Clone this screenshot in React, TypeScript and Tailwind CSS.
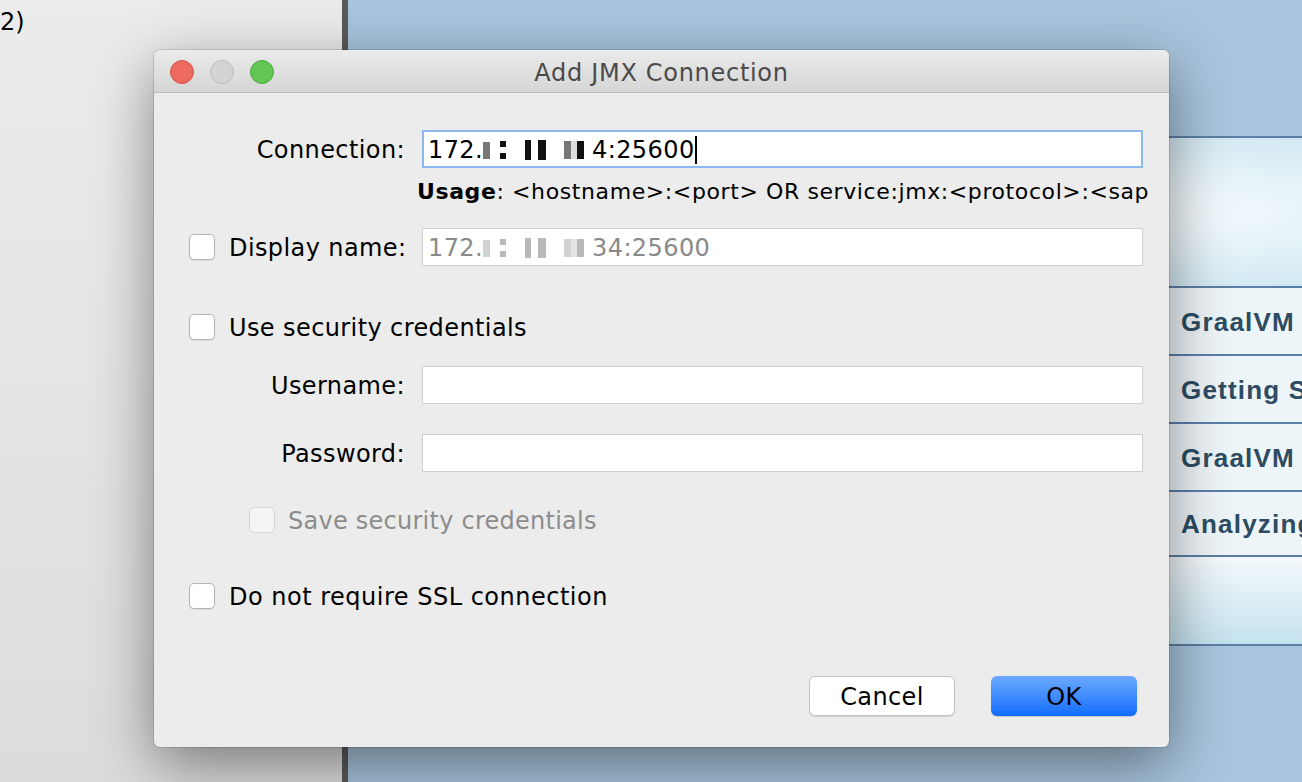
import React from "react";

const font = "font-['DejaVu_Sans','Liberation_Sans',sans-serif]";

// ─── Small pieces ─────────────────────────────────────────────────────────────
function Checkbox({ disabled = false }: { disabled?: boolean }) {
  return (
    <div
      className={
        disabled
          ? "w-[26px] h-[26px] rounded-[5px] border border-[#d6d6d6] bg-[#f4f4f4] shrink-0"
          : "w-[26px] h-[26px] rounded-[5px] border border-[#b4b4b4] bg-white shadow-[0_1px_1px_rgba(0,0,0,0.08)] shrink-0"
      }
    />
  );
}

function Label({ text }: { text: string }) {
  return (
    <div className="w-[251px] pt-[2px] text-right text-[24px] tracking-[0.4px] text-black shrink-0 whitespace-nowrap">
      {text}
    </div>
  );
}

// pixelated, blurred-out part of the address
function MaskedOctets({ faded = false }: { faded?: boolean }) {
  const dark = faded ? "bg-[#b9b9b9]" : "bg-[#111]";
  const mid = faded ? "bg-[#d2d2d2]" : "bg-[#777]";
  return (
    <div className="flex items-center h-[24px]">
      <span className={`w-[7px] h-[17px] ${mid}`} />
      <span className="w-[10px]" />
      <span className="flex flex-col justify-between w-[6px] h-[18px]">
        <span className={`h-[6px] ${dark}`} />
        <span className={`h-[6px] ${dark}`} />
      </span>
      <span className="w-[19px]" />
      <span className={`w-[6px] h-[20px] ${dark}`} />
      <span className="w-[7px]" />
      <span className={`w-[8px] h-[20px] ${dark}`} />
      <span className="w-[18px]" />
      <span className={`w-[7px] h-[18px] ${mid}`} />
      <span className={`w-[6px] h-[18px] ${faded ? "bg-[#e4e4e4]" : "bg-[#ddd]"}`} />
      <span className={`w-[7px] h-[18px] ${dark}`} />
      <span className="w-[8px]" />
    </div>
  );
}

// ─── Background window ────────────────────────────────────────────────────────
function Backdrop() {
  const rows = ["GraalVM", "Getting Started", "GraalVM", "Analyzing"];
  return (
    <div className="flex w-full h-full">
      <div className="w-[342px] h-full bg-gradient-to-b from-[#ececec] to-[#dcdcdc] text-[24px] text-black pt-[4px]">
        2)
      </div>
      <div className="w-[6px] h-full bg-[#5a5a5a]" />
      <div className="flex-1 h-full bg-[#a8c5dd] flex flex-col overflow-hidden">
        <div className="h-[136px] shrink-0" />
        <div className="h-[152px] shrink-0 border-y-2 border-[#5a7fa6] bg-[radial-gradient(ellipse_at_62%_50%,#ffffff_0%,#eef7fb_35%,#c7e3ef_100%)]" />
        {rows.map((r, i) => (
          <div
            key={i}
            className={`${i === 3 ? "h-[65px]" : "h-[68px]"} shrink-0 border-b-2 border-[#5a7fa6] bg-[#eef5f9] flex items-center pl-[833px] pt-[2px] font-['Liberation_Sans',sans-serif] text-[26px] font-bold text-[#2d4c62] whitespace-nowrap tracking-[1.2px]`}
          >
            {r}
          </div>
        ))}
        <div className="h-[89px] shrink-0 border-b-2 border-[#5a7fa6] bg-gradient-to-b from-[#f4f9fc] to-[#c4e2ee]" />
      </div>
    </div>
  );
}

// ─── Dialog ───────────────────────────────────────────────────────────────────
function Dialog() {
  return (
    <div className="absolute left-[154px] top-[50px] w-[1015px] h-[697px] rounded-[6px] bg-[#ececec] shadow-[0_18px_60px_rgba(0,0,0,0.45),0_0_0_1px_rgba(0,0,0,0.12)] flex flex-col overflow-hidden">
      {/* Title bar */}
      <div className="relative h-[43px] shrink-0 bg-gradient-to-b from-[#ebebeb] to-[#d6d6d6] border-b border-[#bcbcbc] flex items-center justify-center pt-[3px]">
        <div className="absolute left-[16px] top-[10px] flex gap-[16px]">
          <span className="w-[24px] h-[24px] rounded-full bg-[#ee6a5f] border border-[#d5554b]" />
          <span className="w-[24px] h-[24px] rounded-full bg-[#d3d3d3] border border-[#bdbdbd]" />
          <span className="w-[24px] h-[24px] rounded-full bg-[#62c655] border border-[#4fa840]" />
        </div>
        <span className="text-[24px] tracking-[0.7px] text-[#4a4a4a]">Add JMX Connection</span>
      </div>

      {/* Body */}
      <div className="flex flex-col pt-[37px] text-[24px] tracking-[0.4px] whitespace-nowrap">
        {/* Connection */}
        <div className="flex items-center h-[38px]">
          <Label text="Connection:" />
          <div className="ml-[17px] w-[721px] h-[38px] bg-white border-2 border-[#8db8ee] flex items-center pl-[4px] pt-[2px] text-black">
            <span>172.</span>
            <MaskedOctets />
            <span>4:25600</span>
            <span className="w-[2px] h-[28px] bg-black" />
          </div>
        </div>

        {/* Usage */}
        <div className="h-[24px] mt-[10px] pl-[263px] pt-[2px] text-[22px] tracking-[0.6px] text-black flex items-center">
          <b>Usage</b>: &lt;hostname&gt;:&lt;port&gt; OR service:jmx:&lt;protocol&gt;:&lt;sap
        </div>

        {/* Display name */}
        <div className="flex items-center h-[38px] mt-[26px]">
          <div className="w-[251px] flex items-center pl-[35px] gap-[14px] shrink-0">
            <Checkbox />
            <span className="text-black pt-[2px]">Display name:</span>
          </div>
          <div className="ml-[17px] w-[721px] h-[38px] bg-white border border-[#cfcfcf] flex items-center pl-[5px] pt-[2px] text-[#8a8a8a]">
            <span>172.</span>
            <MaskedOctets faded />
            <span>34:25600</span>
          </div>
        </div>

        {/* Use security credentials */}
        <div className="flex items-center h-[26px] mt-[48px] pl-[35px] gap-[14px]">
          <Checkbox />
          <span className="text-black pt-[2px]">Use security credentials</span>
        </div>

        {/* Username */}
        <div className="flex items-center h-[38px] mt-[26px]">
          <Label text="Username:" />
          <div className="ml-[17px] w-[721px] h-[38px] bg-white border border-[#cfcfcf]" />
        </div>

        {/* Password */}
        <div className="flex items-center h-[38px] mt-[30px]">
          <Label text="Password:" />
          <div className="ml-[17px] w-[721px] h-[38px] bg-white border border-[#cfcfcf]" />
        </div>

        {/* Save credentials (disabled) */}
        <div className="flex items-center h-[26px] mt-[35px] pl-[95px] gap-[13px]">
          <Checkbox disabled />
          <span className="text-[#8c8c8c] tracking-[0.25px] pt-[2px]">Save security credentials</span>
        </div>

        {/* SSL */}
        <div className="flex items-center h-[26px] mt-[50px] pl-[35px] gap-[14px]">
          <Checkbox />
          <span className="text-black tracking-[0.5px] pt-[2px]">Do not require SSL connection</span>
        </div>

        {/* Buttons */}
        <div className="flex justify-end items-center h-[40px] mt-[67px] pr-[32px] gap-[36px]">
          <button className="w-[146px] h-[40px] rounded-[6px] bg-white border border-[#c4c4c4] shadow-[0_1px_1px_rgba(0,0,0,0.12)] text-[24px] text-black pt-[2px]">
            Cancel
          </button>
          <button className="w-[146px] h-[40px] rounded-[6px] bg-gradient-to-b from-[#6aa9fe] to-[#0b6cfe] shadow-[0_1px_1px_rgba(0,0,0,0.15)] text-[24px] text-black pt-[2px]">
            OK
          </button>
        </div>
      </div>
    </div>
  );
}

export default function App() {
  return (
    <div className={`relative w-[1302px] h-[782px] overflow-hidden ${font}`}>
      <Backdrop />
      <Dialog />
    </div>
  );
}
